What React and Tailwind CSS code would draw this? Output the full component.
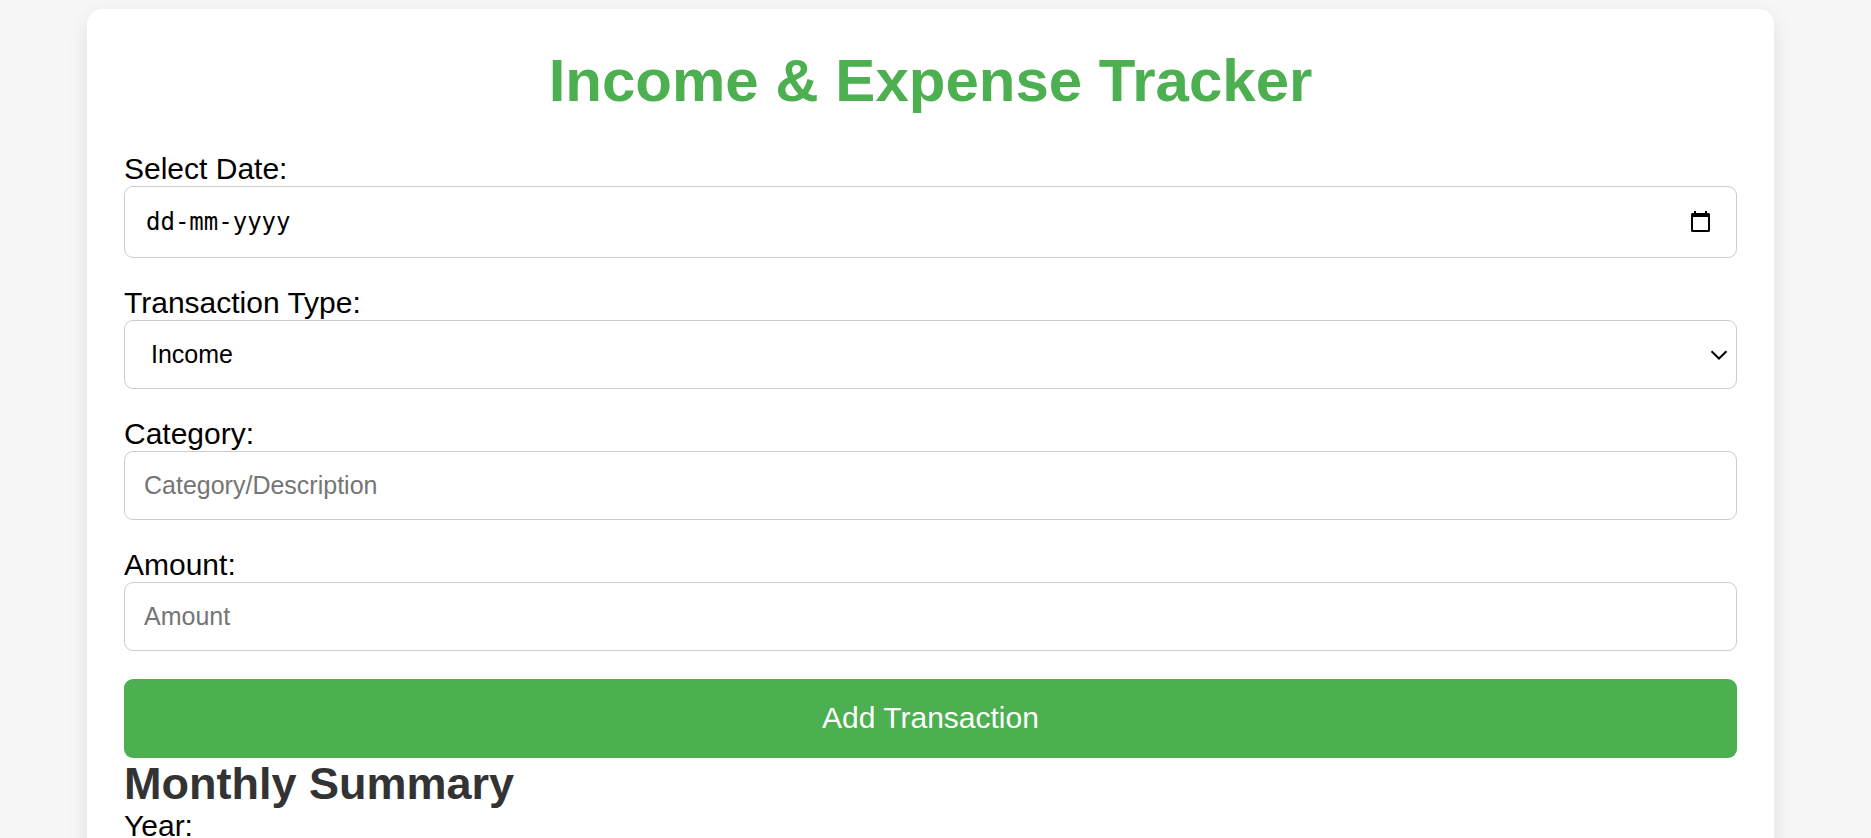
const box = "block w-full rounded-[9px] border border-[#cccccc] bg-white outline-none";
const control = `${box} py-[19px] text-[25px] leading-[29px]`;

function Field({ id, label, children }) {
  return (
    <div className="mb-7">
      <label htmlFor={id} className="block pb-px text-[30px] leading-[33px]">
        {label}
      </label>
      {children}
    </div>
  );
}

function CalendarIcon() {
  return (
    <svg viewBox="0 0 19 21" className="h-[21px] w-[19px]" aria-hidden="true">
      <path
        fill="#000"
        fillRule="evenodd"
        d="M3 0h2v2h9V0h2v2h1.500a1.500 1.500 0 0 1 1.500 1.500v16a1.500 1.500 0 0 1-1.500 1.500h-16A1.500 1.500 0 0 1 0 19.500v-16A1.500 1.500 0 0 1 1.500 2H3zM2 6v13h15v-13z"
      />
    </svg>
  );
}

export default function App() {
  return (
    <div className="min-h-screen bg-[#f7f7f7] pt-[9px] pr-[10px] font-['Liberation_Sans',Arial,sans-serif] text-black">
      <main className="mx-auto max-w-[1687px] rounded-[15px] bg-white p-[37px] shadow-[0_7px_22px_rgba(0,0,0,0.1)]">
        <h1 className="mb-9 text-center text-[60px] leading-[70px] font-bold text-[#4caf50]">
          Income &amp; Expense Tracker
        </h1>

        <form onSubmit={(e) => e.preventDefault()}>
          <Field id="date" label="Select Date:">
            <div className="relative">
              <input
                id="date"
                type="text"
                placeholder="dd-mm-yyyy"
                className={`${box} px-[21px] py-[21px] font-['DejaVu_Sans_Mono',monospace] text-[24px] leading-7 placeholder:text-black placeholder:opacity-100`}
              />
              <button
                type="button"
                aria-label="Open calendar"
                className="absolute inset-y-0 right-[27px] flex items-center pb-0.5"
              >
                <CalendarIcon />
              </button>
            </div>
          </Field>

          <Field id="type" label="Transaction Type:">
            <div className="relative">
              <select id="type" className={`${control} appearance-none pr-[19px] pl-[26px]`}>
                <option>Income</option>
                <option>Expense</option>
              </select>
              <svg
                viewBox="0 0 18 10"
                className="pointer-events-none absolute top-[30px] right-[9px] h-[10px] w-[18px]"
                aria-hidden="true"
              >
                <path d="M1.500 1.200 9 8.500l7.500-7.300" fill="none" stroke="#000" strokeWidth="2" />
              </svg>
            </div>
          </Field>

          <Field id="category" label="Category:">
            <input
              id="category"
              type="text"
              placeholder="Category/Description"
              className={`${control} px-[19px] placeholder:text-[#757575]`}
            />
          </Field>

          <Field id="amount" label="Amount:">
            <input
              id="amount"
              type="number"
              placeholder="Amount"
              className={`${control} px-[19px] placeholder:text-[#757575]`}
            />
          </Field>

          <button
            type="submit"
            className="block w-full rounded-[9px] bg-[#4caf50] pt-[21px] pb-[23px] text-[30px] leading-[35px] text-white"
          >
            Add Transaction
          </button>
        </form>

        <section>
          <h2 className="text-[45px] leading-[51px] font-bold text-[#333333]">Monthly Summary</h2>
          <p className="text-[30px] leading-[34px]">Year:</p>
        </section>
      </main>
    </div>
  );
}
